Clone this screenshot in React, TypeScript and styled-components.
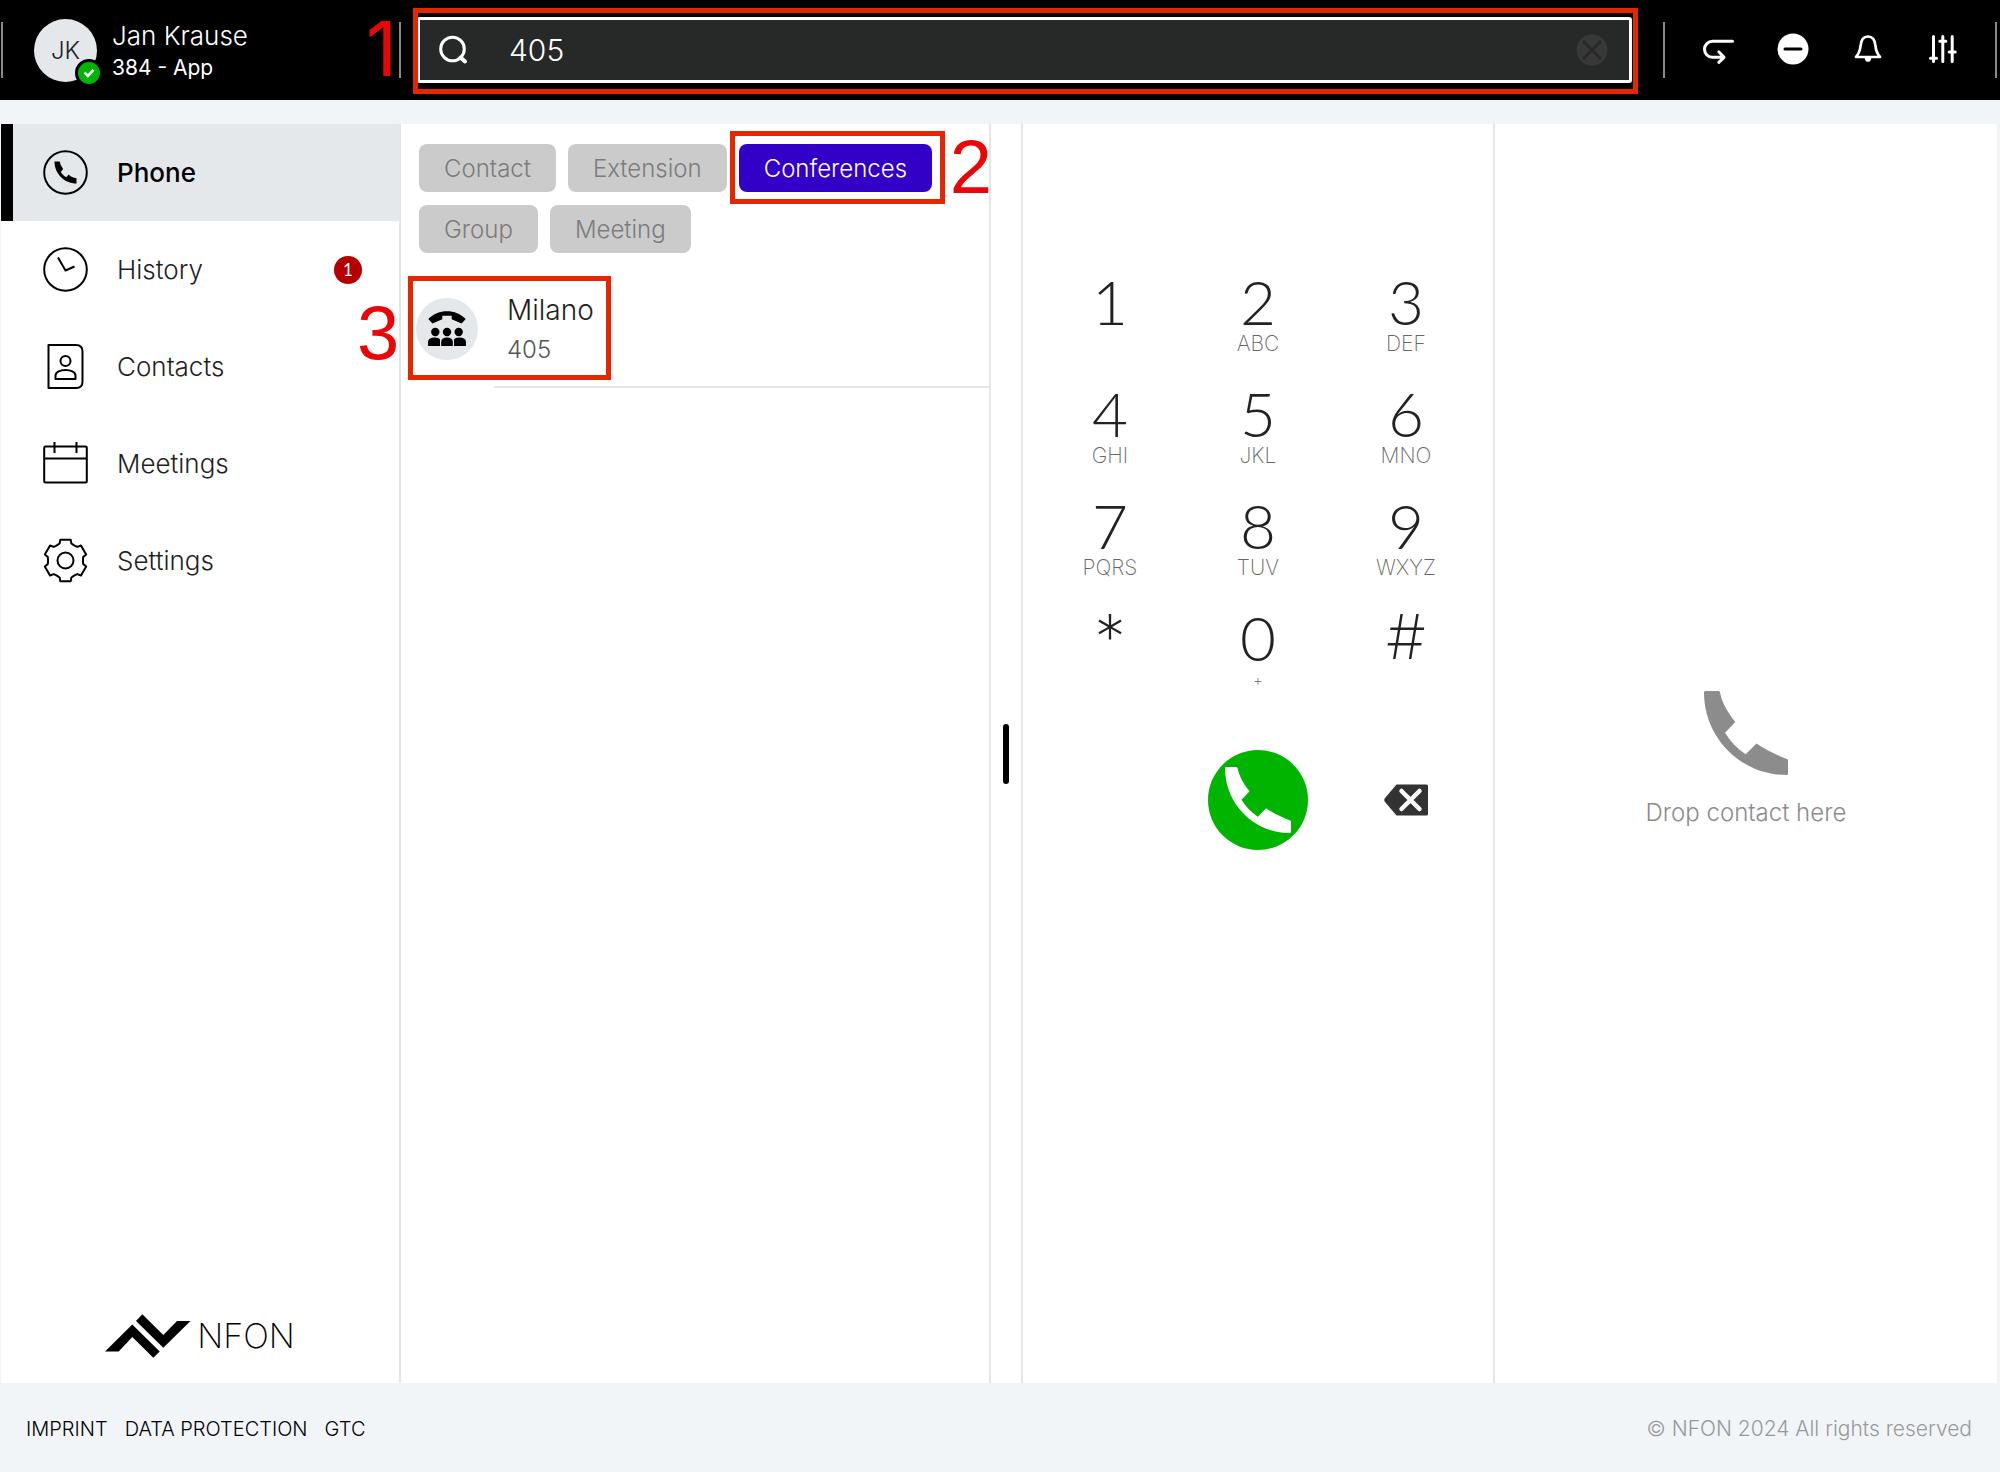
import React, { useState } from "react";
import styled, { createGlobalStyle } from "styled-components";

const color = {
  black: "#000000",
  ink: "#1f1f1f",
  page: "#f1f5f8",
  line: "#e5e6e8",
  shade: "#e4e8eb",
  chip: "#cbcbcb",
  muted: "#8c8c8c",
  violet: "#3300c8",
  green: "#00b400",
  alert: "#b40000",
  marker: "#e52600",
  markerText: "#ea0606",
};

const GlobalStyle = createGlobalStyle`
  *, *::before, *::after { box-sizing: border-box; }
  body {
    margin: 0;
    background: ${color.page};
    color: ${color.ink};
    font-family: Inter, "Liberation Sans", sans-serif;
    font-weight: 300;
  }
  button, input { font: inherit; color: inherit; }
  button { border: 0; padding: 0; background: none; cursor: pointer; }
  ul { list-style: none; margin: 0; padding: 0; }
  svg { display: block; }
`;

const Page = styled.div`
  display: flex;
  flex-direction: column;
  min-height: 100vh;
`;

/* Header */

const Header = styled.header`
  display: flex;
  align-items: center;
  height: 100px;
  padding: 0 3px 0 1px;
  background: ${color.black};
  color: #ffffff;
`;

const Separator = styled.span`
  flex: none;
  width: 2px;
  height: 56px;
  background: #8a8a8a;
`;

const User = styled.div`
  display: flex;
  align-items: center;
  flex: none;
  gap: 15px;
  width: 396px;
  padding-left: 31px;
`;

const UserAvatar = styled.div`
  position: relative;
  display: grid;
  place-items: center;
  width: 63px;
  height: 63px;
  border-radius: 50%;
  background: ${color.shade};
  color: ${color.ink};
  font-size: 24px;
`;

const Presence = styled.span`
  position: absolute;
  right: -6px;
  bottom: -5px;
  display: grid;
  place-items: center;
  width: 28px;
  height: 28px;
  border: 3px solid ${color.black};
  border-radius: 50%;
  background: ${color.green};
`;

const UserText = styled.div`
  padding-top: 3px;
  line-height: 32px;
`;

const UserName = styled.div`
  font-size: 26px;
`;

const UserExtension = styled.div`
  font-size: 21px;
  font-weight: 400;
`;

const SearchField = styled.div`
  position: relative;
  display: flex;
  align-items: center;
  flex: 1;
  min-width: 0;
  height: 66px;
  margin: 0 31px 0 16px;
  padding: 0 21px 0 18px;
  border: 3px solid #ffffff;
  border-radius: 3px;
  background: #272929;
`;

const SearchInput = styled.input`
  flex: 1;
  min-width: 0;
  height: 60px;
  margin-left: 41px;
  padding: 0;
  border: 0;
  outline: 0;
  background: transparent;
  font-size: 30px;
`;

const Tools = styled.div`
  display: flex;
  flex: none;
  margin: 0 15px;
  padding-bottom: 3px;
`;

const ToolButton = styled.button`
  display: grid;
  place-items: center;
  width: 75px;
  height: 60px;
`;

/* Numbered highlights laid over the interface */

const Outline = styled.span<{ $inset: string }>`
  position: absolute;
  inset: ${(p) => p.$inset};
  z-index: 1;
  border: 5px solid ${color.marker};
  pointer-events: none;
`;

const Step = styled.span<{ $x: number; $y: number; $family?: string }>`
  position: absolute;
  left: ${(p) => p.$x}px;
  top: ${(p) => p.$y}px;
  z-index: 1;
  color: ${color.markerText};
  font: 400 76px/76px ${(p) => p.$family ?? '"Liberation Sans"'}, Arial, sans-serif;
  pointer-events: none;
`;

/* Columns */

const Main = styled.main`
  display: flex;
  flex: 1;
  margin: 24px 3px 0 1px;
  background: #ffffff;
`;

const Sidebar = styled.aside`
  display: flex;
  flex: none;
  flex-direction: column;
  width: 400px;
  border-right: 2px solid ${color.line};
`;

const NavButton = styled.button<{ $active: boolean }>`
  display: flex;
  align-items: center;
  gap: 29px;
  width: 100%;
  height: 97px;
  padding: 0 37px 0 30px;
  border-left: 12px solid ${(p) => (p.$active ? color.black : "transparent")};
  background: ${(p) => (p.$active ? color.shade : "transparent")};
  color: ${(p) => (p.$active ? color.black : color.ink)};
  font-size: 26px;
  font-weight: ${(p) => (p.$active ? 500 : 300)};
`;

const NavCount = styled.span`
  display: grid;
  place-items: center;
  width: 28px;
  height: 28px;
  margin-left: auto;
  border-radius: 50%;
  background: ${color.alert};
  color: #ffffff;
  font: 400 17px/28px Lato, sans-serif;
`;

const Brand = styled.div`
  display: flex;
  align-items: center;
  justify-content: center;
  gap: 6px;
  margin-top: auto;
  padding-bottom: 25px;
  color: ${color.black};
  font-size: 34px;
  line-height: 44px;
  font-weight: 200;
`;

const Results = styled.section`
  flex: 589 1 0;
  min-width: 0;
  border-right: 2px solid ${color.line};
`;

const Chips = styled.div`
  display: flex;
  flex-wrap: wrap;
  gap: 13px 12px;
  padding: 20px 0 0 18px;
`;

const Chip = styled.button<{ $active: boolean }>`
  position: relative;
  height: 48px;
  padding: 0 25px;
  border-radius: 8px;
  background: ${(p) => (p.$active ? color.violet : color.chip)};
  color: ${(p) => (p.$active ? "#ffffff" : "#7c7c7c")};
  font-size: 24px;
`;

const ResultRow = styled.li`
  position: relative;
  display: flex;
  align-items: center;
  gap: 16px;
  margin-top: 16px;
  padding-left: 15px;
`;

const ResultAvatar = styled.div`
  display: grid;
  place-items: center;
  flex: none;
  width: 62px;
  height: 62px;
  border-radius: 50%;
  background: ${color.shade};
`;

const ResultText = styled.div`
  flex: 1;
  padding: 21px 0 16px 13px;
  border-bottom: 2px solid ${color.line};
  line-height: 40px;
`;

const ResultName = styled.div`
  font-size: 28px;
`;

const ResultNumber = styled.div`
  color: #555555;
  font-size: 24px;
`;

const Splitter = styled.div`
  display: grid;
  place-items: center;
  flex: none;
  width: 30px;
`;

const Grip = styled.span`
  width: 6px;
  height: 60px;
  border-radius: 3px;
  background: ${color.black};
`;

const Dialer = styled.section`
  flex: none;
  width: 474px;
  padding-top: 147px;
  border: solid ${color.line};
  border-width: 0 2px;
`;

const KeyGrid = styled.div`
  display: grid;
  grid-template-columns: repeat(3, 148px);
  justify-content: center;
  row-gap: 29px;
`;

const Key = styled.button`
  display: flex;
  flex-direction: column;
  align-items: center;
  gap: 3px;
  height: 83px;
`;

const KeyDigit = styled.span<{ $symbol: boolean }>`
  color: #222222;
  font-family: ${(p) => (p.$symbol ? "Inter" : "Lato")}, sans-serif;
  font-size: 62px;
  font-weight: ${(p) => (p.$symbol ? 200 : 300)};
  line-height: 60px;
`;

const KeyLetters = styled.span`
  color: #666666;
  font-size: 21px;
  line-height: 20px;
  font-weight: 200;
`;

const KeyPlus = styled(KeyLetters)`
  font-size: 16px;
`;

const CallRow = styled.div`
  display: grid;
  grid-template-columns: repeat(3, 148px);
  justify-content: center;
  place-items: center;
  margin-top: 60px;
`;

const CallButton = styled.button`
  display: grid;
  grid-column: 2;
  place-items: center;
  width: 100px;
  height: 100px;
  border-radius: 50%;
  background: ${color.green};
  color: #ffffff;
`;

const EraseButton = styled.button`
  color: #333333;
`;

const DropZone = styled.section`
  display: flex;
  flex: 503 1 0;
  flex-direction: column;
  align-items: center;
  justify-content: center;
  gap: 22px;
  padding-top: 13px;
  color: ${color.muted};
  font-size: 24px;
  line-height: 32px;
`;

const Footer = styled.footer`
  display: flex;
  align-items: center;
  justify-content: space-between;
  height: 89px;
  padding: 2px 28px 0 26px;
  color: #999999;
  font-size: 21px;
`;

const FooterLinks = styled.nav`
  display: flex;
  gap: 17px;
`;

const FooterLink = styled.a`
  color: ${color.black};
  font-size: 20px;
  text-decoration: none;
`;

/* Icons */

const Handset = ({ size }: { size: number }) => (
  <svg width={size} height={size} viewBox="0 0 84 84" fill="currentColor" aria-hidden="true">
    <path d="M1.5 0H14.5Q15.6 0 16 1.5C18.5 13 24 21.5 31.3 31L21 41.7C26 50 33 57.5 41.7 63.3L52.5 52.6C61.5 59 71 63.5 83 68Q84 68.5 84 69.5V82.5Q84 84 82.500 84C37 84 0 47 0 1.5Q0 0 1.5 0Z" />
  </svg>
);

const gearPath = Array.from({ length: 6 }, (_, i) => i * 60 - 90)
  .flatMap((a) => [
    [a - 27, 17.5],
    [a - 19, 18],
    [a - 14, 21.5],
    [a + 14, 21.5],
    [a + 19, 18],
    [a + 27, 17.5],
  ])
  .map(([deg, r], i) => {
    const rad = (deg * Math.PI) / 180;
    return `${i ? "L" : "M"}${(22.5 + r * Math.cos(rad)).toFixed(2)} ${(22.5 + r * Math.sin(rad)).toFixed(2)}`;
  })
  .join("");

const NavIcon = ({ children }: { children: React.ReactNode }) => (
  <svg width="45" height="45" viewBox="0 0 45 45" fill="none" stroke="#000000" strokeWidth="2" strokeLinejoin="round" aria-hidden="true">
    {children}
  </svg>
);

const ToolIcon = ({ children }: { children: React.ReactNode }) => (
  <svg width="32" height="32" viewBox="0 0 32 32" fill="none" stroke="#ffffff" strokeWidth="3" strokeLinecap="round" strokeLinejoin="round" aria-hidden="true">
    {children}
  </svg>
);

const navItems = [
  {
    label: "Phone",
    icon: (
      <NavIcon>
        <circle cx="22.5" cy="22.5" r="21.3" />
        <g transform="translate(11.5 11.5) scale(.262)" stroke="none" fill="#000000">
          <path d="M0 0H20Q21 13 33 29L24 40C29 48 36 55 45 60L54 50C61.5 58 71 62 84 64V84C37 84 0 47 0 0Z" />
        </g>
      </NavIcon>
    ),
  },
  {
    label: "History",
    count: 1,
    icon: (
      <NavIcon>
        <circle cx="22.5" cy="22.5" r="21.3" />
        <path d="M15 10.5L22.5 23.5L31.5 19.5" />
      </NavIcon>
    ),
  },
  {
    label: "Contacts",
    icon: (
      <NavIcon>
        <path d="M5.5 1H33Q39.5 1 39.5 7.5V37.5Q39.5 44 33 44H5.5Z" />
        <circle cx="22.5" cy="17" r="5" />
        <path d="M12.5 35V31.5C12.5 24 32.5 24 32.5 31.5V35Z" />
      </NavIcon>
    ),
  },
  {
    label: "Meetings",
    icon: (
      <NavIcon>
        <rect x="1.2" y="5.5" width="42.6" height="36" rx="1.5" />
        <path d="M1.2 17.5H43.8M11.5 1V12M33.5 1V12" />
      </NavIcon>
    ),
  },
  {
    label: "Settings",
    icon: (
      <NavIcon>
        <path d={`${gearPath}Z`} />
        <circle cx="22.5" cy="22.5" r="8" />
      </NavIcon>
    ),
  },
];

const tools = [
  {
    label: "Call forwarding",
    icon: (
      <ToolIcon>
        <path d="M30.5 8.3H10.5A8 8 0 0 0 10.5 24.3H21M16.8 18.8L22 24.3L16.8 29.3" />
      </ToolIcon>
    ),
  },
  {
    label: "Do not disturb",
    icon: (
      <ToolIcon>
        <circle cx="16" cy="16" r="15.5" fill="#ffffff" stroke="none" />
        <path d="M8 16H24" stroke="#000000" />
      </ToolIcon>
    ),
  },
  {
    label: "Notifications",
    icon: (
      <ToolIcon>
        <path d="M4 24H28C25 20.5 24 18 23.5 13C23 7 20.5 3.5 16 3.5S9 7 8.5 13C8 18 7 20.5 4 24Z" strokeWidth="2.7" />
        <path d="M13.5 25.5H18.5Q18 28 16 28T13.5 25.5Z" fill="#ffffff" strokeWidth="1.5" />
      </ToolIcon>
    ),
  },
  {
    label: "Audio settings",
    icon: (
      <ToolIcon>
        <path d="M6.5 3.5V28.5M15.8 3.5V28.5M25.2 3.5V28.5M3.5 25.3H9.5M12.8 8.3H18.8M22.2 19H28.2" />
      </ToolIcon>
    ),
  },
];

const keys = [
  ["1", ""],
  ["2", "ABC"],
  ["3", "DEF"],
  ["4", "GHI"],
  ["5", "JKL"],
  ["6", "MNO"],
  ["7", "PQRS"],
  ["8", "TUV"],
  ["9", "WXYZ"],
  ["*", ""],
  ["0", "+"],
  ["#", ""],
];

const filters = ["Contact", "Extension", "Conferences", "Group", "Meeting"];

export default function App() {
  const [query, setQuery] = useState("405");
  const [page, setPage] = useState("Phone");
  const [filter, setFilter] = useState("Conferences");

  return (
    <Page>
      <GlobalStyle />
      <Header>
        <Separator />
        <User>
          <UserAvatar>
            JK
            <Presence>
              <svg width="12" height="10" viewBox="0 0 12 10" fill="none" stroke="#ffffff" strokeWidth="2.6" aria-hidden="true">
                <path d="M1.5 4.5L4.8 7.8L10.5 1.8" />
              </svg>
            </Presence>
          </UserAvatar>
          <UserText>
            <UserName>Jan Krause</UserName>
            <UserExtension>384 - App</UserExtension>
          </UserText>
        </User>
        <Separator />
        <SearchField role="search">
          <svg width="30" height="30" viewBox="0 0 30 30" fill="none" stroke="#ffffff" strokeWidth="3" strokeLinecap="round" aria-hidden="true">
            <circle cx="14.5" cy="14" r="11.8" />
            <path d="M22.5 22.5L27 26.5" strokeWidth="4" />
          </svg>
          <SearchInput aria-label="Search" value={query} onChange={(e) => setQuery(e.target.value)} />
          <button type="button" aria-label="Clear search" onClick={() => setQuery("")}>
            <svg width="32" height="32" viewBox="0 0 32 32" aria-hidden="true">
              <circle cx="16" cy="16" r="15.5" fill="#383838" />
              <path d="M7 7L25 25M25 7L7 25" stroke="#272929" strokeWidth="3" />
            </svg>
          </button>
          <Outline $inset="-12px -9px -14px -7px" />
          <Step $x={-54} $y={-10} $family="Inter">1</Step>
        </SearchField>
        <Separator />
        <Tools>
          {tools.map((t) => (
            <ToolButton key={t.label} type="button" aria-label={t.label}>
              {t.icon}
            </ToolButton>
          ))}
        </Tools>
        <Separator />
      </Header>

      <Main>
        <Sidebar>
          <nav>
            <ul>
              {navItems.map((item) => (
                <li key={item.label}>
                  <NavButton type="button" $active={page === item.label} onClick={() => setPage(item.label)}>
                    {item.icon}
                    <span>{item.label}</span>
                    {item.count && <NavCount>{item.count}</NavCount>}
                  </NavButton>
                </li>
              ))}
            </ul>
          </nav>
          <Brand>
            <svg width="86" height="44" viewBox="0 0 86 44" aria-hidden="true">
              <path d="M0 37.5L27.3 10.5L54.7 37.5L48.3 43.8L27.3 23L13.7 37.5Z" />
              <path d="M37.3 .3L58.3 21L72 7H85.5L58.3 33.7L31 7Z" />
            </svg>
            <span>NFON</span>
          </Brand>
        </Sidebar>

        <Results>
          <Chips>
            {filters.map((name) => (
              <Chip key={name} type="button" $active={filter === name} onClick={() => setFilter(name)}>
                {name}
                {name === "Conferences" && (
                  <>
                    <Outline $inset="-13px -13px -12px -9px" />
                    <Step $x={211} $y={-15}>2</Step>
                  </>
                )}
              </Chip>
            ))}
          </Chips>
          <ul>
            <ResultRow>
              <ResultAvatar>
                <svg width="38" height="36" viewBox="0 0 38 36" aria-hidden="true">
                  <path d="M.3 8C10-2.5 28-2.5 37.7 8L33.6 12.5L23.7 8.3V4.8H14.3V8.3L4.4 12.5Z" />
                  <circle cx="7.3" cy="21" r="4.2" />
                  <circle cx="19" cy="21" r="4.2" />
                  <circle cx="30.7" cy="21" r="4.2" />
                  <path d="M0 35V31Q0 26.5 7 26.5Q11 26.5 12 28.5V35ZM13.2 35V31Q13.2 26.5 19 26.5T24.8 31V35ZM26 35V28.5Q27 26.5 31 26.5Q38 26.5 38 31V35Z" />
                </svg>
              </ResultAvatar>
              <ResultText>
                <ResultName>Milano</ResultName>
                <ResultNumber>405</ResultNumber>
              </ResultText>
              <Outline $inset="7px calc(100% - 210px) 8px 7px" />
              <Step $x={-44} $y={26}>3</Step>
            </ResultRow>
          </ul>
        </Results>

        <Splitter>
          <Grip />
        </Splitter>

        <Dialer>
          <KeyGrid>
            {keys.map(([digit, letters]) => (
              <Key key={digit} type="button" onClick={() => setQuery(query + digit)}>
                <KeyDigit $symbol={digit === "*" || digit === "#"}>{digit}</KeyDigit>
                {letters === "+" ? <KeyPlus>+</KeyPlus> : letters && <KeyLetters>{letters}</KeyLetters>}
              </Key>
            ))}
          </KeyGrid>
          <CallRow>
            <CallButton type="button" aria-label="Call">
              <Handset size={66} />
            </CallButton>
            <EraseButton type="button" aria-label="Delete digit" onClick={() => setQuery(query.slice(0, -1))}>
              <svg width="44" height="32" viewBox="0 0 44 32" aria-hidden="true">
                <path d="M12.5 .5H42.5Q44 .5 44 2V30Q44 31.5 42.5 31.5H12.5L1 18Q-.5 16 1 14Z" fill="currentColor" />
                <path d="M17.5 7L35.5 25M35.5 7L17.5 25" stroke="#ffffff" strokeWidth="4.5" strokeLinecap="round" />
              </svg>
            </EraseButton>
          </CallRow>
        </Dialer>

        <DropZone>
          <Handset size={84} />
          <span>Drop contact here</span>
        </DropZone>
      </Main>

      <Footer>
        <FooterLinks>
          <FooterLink href="#imprint">IMPRINT</FooterLink>
          <FooterLink href="#data-protection">DATA PROTECTION</FooterLink>
          <FooterLink href="#gtc">GTC</FooterLink>
        </FooterLinks>
        <span>© NFON 2024 All rights reserved</span>
      </Footer>
    </Page>
  );
}
